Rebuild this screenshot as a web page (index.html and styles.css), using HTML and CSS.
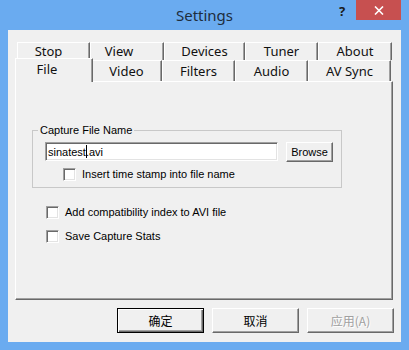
FILE: index.html
```html
<!DOCTYPE html>
<html>
<head>
    <meta charset="UTF-8">
    <title>Settings</title>
    <link rel="stylesheet" href="styles.css">
</head>
<body>
<div class="window">
    <div class="titlebar">
        <div class="title">Settings</div>
        <div class="caption-btns">
            <div class="help">?</div>
            <div class="close">
                <svg width="10" height="9" viewBox="0 0 10 9">
                    <path d="M1 0.5 L9 8.5 M9 0.5 L1 8.5" stroke="#fff" stroke-width="1.6" fill="none"/>
                </svg>
            </div>
        </div>
    </div>

    <div class="client">
        <div class="tab-row back">
            <div class="tab">Stop</div>
            <div class="tab">View</div>
            <div class="tab">Devices</div>
            <div class="tab">Tuner</div>
            <div class="tab">About</div>
        </div>
        <div class="tab-row front">
            <div class="tab selected">File</div>
            <div class="tab">Video</div>
            <div class="tab">Filters</div>
            <div class="tab">Audio</div>
            <div class="tab">AV Sync</div>
        </div>

        <div class="panel">
            <fieldset class="group">
                <legend>Capture File Name</legend>
                <div class="file-row">
                    <div class="textbox">sinatest<span class="caret"></span>.avi</div>
                    <div class="btn browse">Browse</div>
                </div>
                <div class="check inner"><span class="box"></span>Insert time stamp into file name</div>
            </fieldset>
            <div class="check first"><span class="box"></span>Add compatibility index to AVI file</div>
            <div class="check"><span class="box"></span>Save Capture Stats</div>
        </div>

        <div class="buttons">
            <div class="btn big default">确定</div>
            <div class="btn big">取消</div>
            <div class="btn big disabled">应用(A)</div>
        </div>
    </div>
</div>
</body>
</html>
```

FILE: styles.css
```css
* {
    box-sizing: border-box;
}
body {
    margin: 0;
    font-family: "Liberation Sans", Arial, sans-serif;
    font-size: 11px;
    color: #000;
}
.window {
    width: 409px;
    height: 350px;
    background-color: #6aabf0;
    display: flex;
    flex-direction: column;
}
.titlebar {
    height: 30px;
    display: grid;
    grid-template-columns: 1fr auto 1fr;
    align-items: start;
}
.title {
    grid-column: 2;
    font-family: "Noto Sans", sans-serif;
    font-size: 15px;
    line-height: 31px;
    color: #1e2d3c;
}
.caption-btns {
    grid-column: 3;
    justify-self: end;
    display: flex;
    margin-right: 8px;
}
.help {
    width: 28px;
    height: 20px;
    line-height: 22px;
    text-align: center;
    font-family: "Noto Sans", sans-serif;
    font-weight: bold;
    font-size: 13px;
    color: #1a1a1a;
}
.close {
    width: 45px;
    height: 20px;
    background-color: #c75050;
    display: flex;
    align-items: center;
    justify-content: center;
}
.client {
    flex: 1;
    margin: 0 8px 8px;
    background-color: #f0f0f0;
    padding: 12px 8px 0 7px;
}

/* tabs */
.tab-row {
    display: grid;
    margin-left: 2px;
    font-family: "Noto Sans", sans-serif;
    font-size: 13px;
    color: #111;
}
.tab-row.back {
    grid-template-columns: 73px 74px 81px 73px 74px;
    height: 18px;
}
.tab-row.front {
    grid-template-columns: 74px 71px 73px 73px 83px;
    height: 21px;
}
.tab {
    background-color: #f0f0f0;
    border-top: 1px solid #fff;
    border-left: 1px solid #fff;
    border-right: 1px solid #696969;
    box-shadow: inset -1px 0 #a0a0a0;
    text-align: center;
}
.back .tab {
    line-height: 17px;
}
.front .tab {
    line-height: 20px;
}
.back .tab:first-child {
    padding-right: 10px;
}
.back .tab:nth-child(2) {
    padding-right: 16px;
}
.tab.selected {
    margin: -2px -2px -1px;
    z-index: 1;
    padding-right: 14px;
}

/* page */
.panel {
    height: 219px;
    border: 1px solid;
    border-color: #fff #696969 #696969 #fff;
    box-shadow: inset -1px -1px #a0a0a0;
    padding: 42px 0 0 16px;
}
.group {
    width: 310px;
    margin: 0;
    border: 1px solid #c8c8c8;
    padding: 5px 8px 6px 12px;
}
.group legend {
    padding: 0 2px;
    margin-left: -7px;
    line-height: 13px;
}
.file-row {
    display: flex;
    gap: 8px;
}
.textbox {
    width: 233px;
    height: 19px;
    background-color: #fff;
    border: 1px solid;
    border-color: #a0a0a0 #fff #fff #a0a0a0;
    box-shadow: inset 1px 1px #696969, inset -1px -1px #e3e3e3;
    padding: 1px 0 0 2px;
    line-height: 16px;
}
.caret {
    display: inline-block;
    width: 1px;
    height: 13px;
    margin-right: -1px;
    vertical-align: -2px;
    background-color: #000;
}
.btn {
    background-color: #f0f0f0;
    border: 1px solid;
    border-color: #fff #696969 #696969 #fff;
    box-shadow: inset -1px -1px #a0a0a0;
    display: flex;
    align-items: center;
    justify-content: center;
}
.browse {
    width: 47px;
    height: 20px;
}
.check {
    display: flex;
    align-items: center;
    gap: 6px;
    line-height: 13px;
    margin-left: 14px;
    margin-top: 11px;
}
.check.first {
    margin-top: 18px;
}
.check.inner {
    margin: 6px 0 0 18px;
}
.box {
    width: 13px;
    height: 13px;
    background-color: #fff;
    border: 1px solid;
    border-color: #a0a0a0 #fff #fff #a0a0a0;
    box-shadow: inset 1px 1px #696969, inset -1px -1px #e3e3e3;
}

/* dialog buttons */
.buttons {
    display: flex;
    justify-content: flex-end;
    gap: 8px;
    margin-top: 8px;
    margin-right: -1px;
}
.btn.big {
    width: 87px;
    height: 25px;
    font-family: "Noto Sans CJK SC", sans-serif;
    font-size: 12px;
}
.btn.default {
    border: 1px solid #000;
    box-shadow: inset 1px 1px #fff, inset -1px -1px #696969, inset -2px -2px #a0a0a0;
}
.btn.disabled {
    color: #a0a0a0;
    text-shadow: 1px 1px #fff;
}
```
